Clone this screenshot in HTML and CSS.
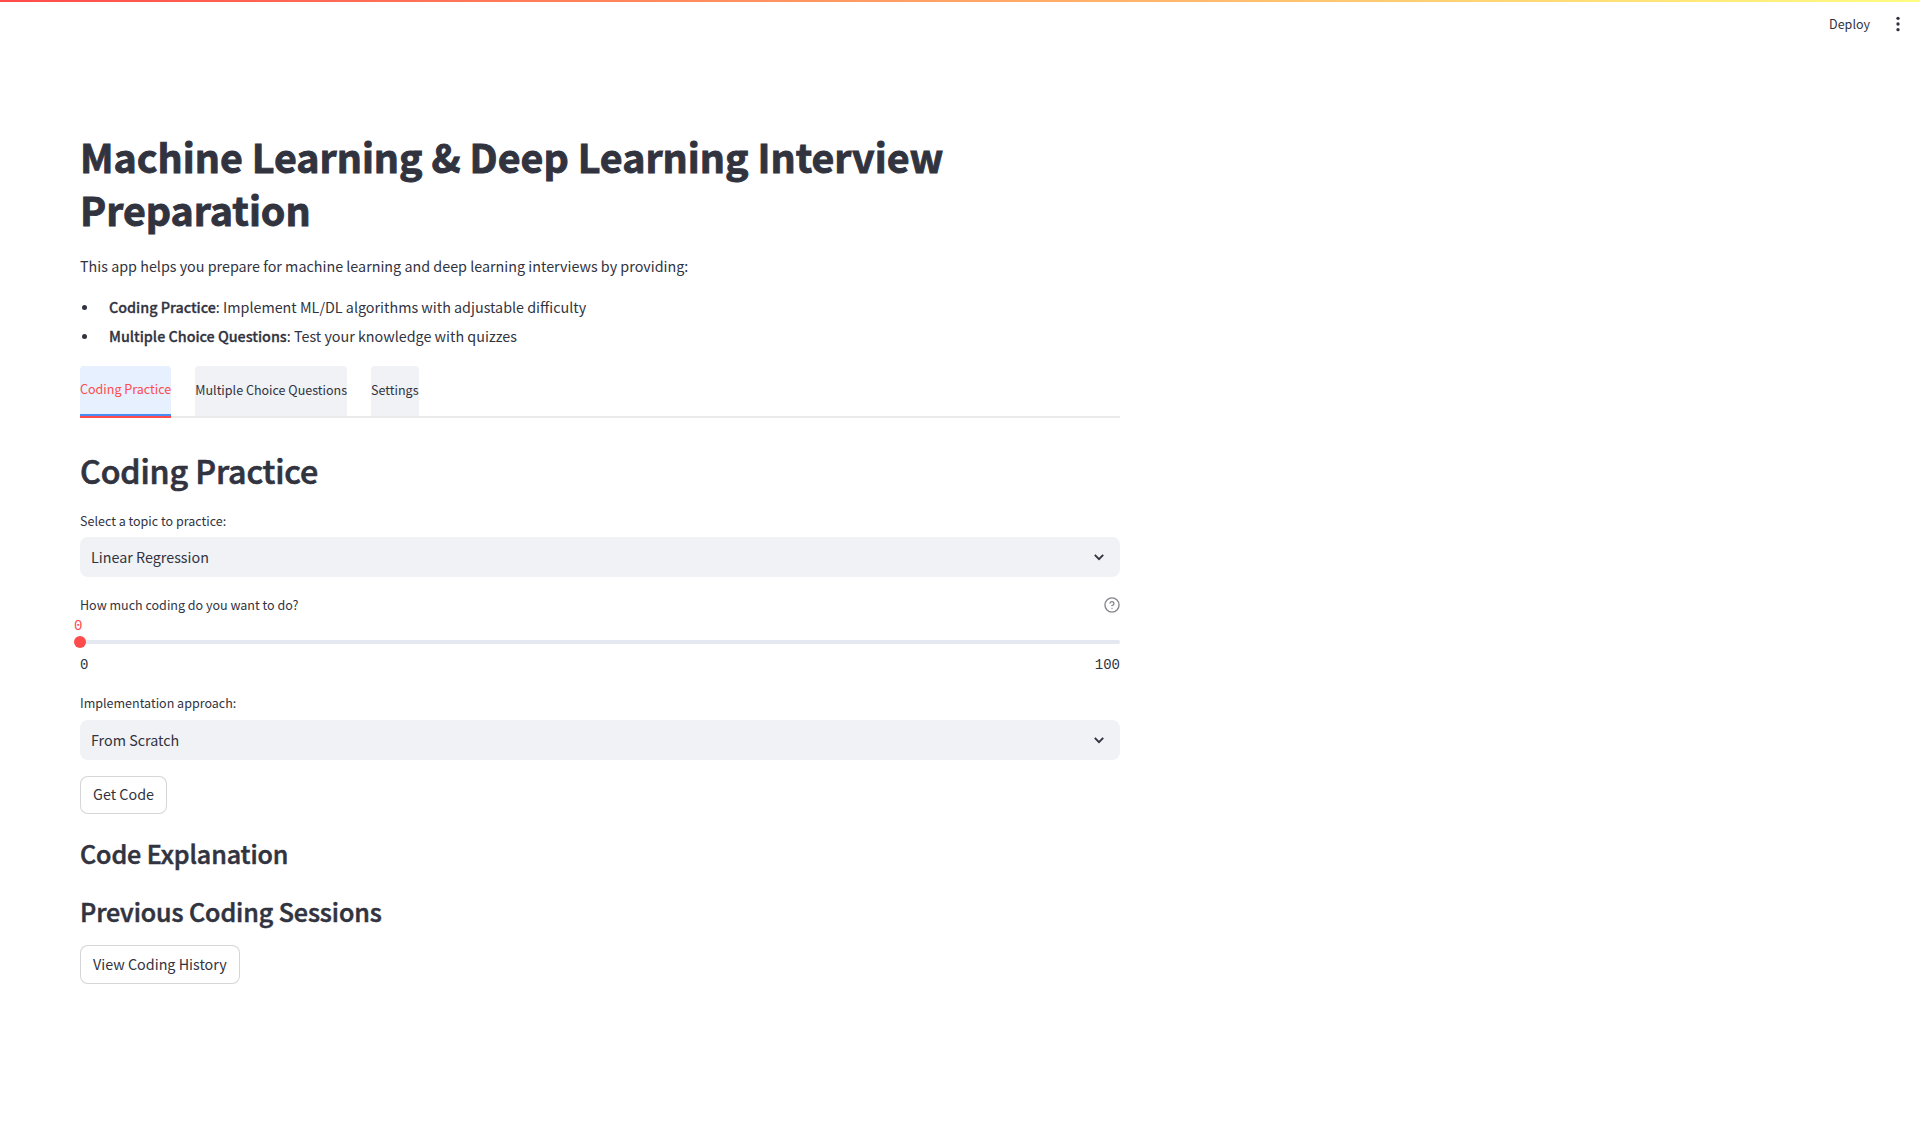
FILE: index.html
```html
<!DOCTYPE html>
<html lang="en">
<head>
<meta charset="utf-8">
<title>Interview Preparation</title>
<link rel="stylesheet" href="styles.css">
</head>
<body>
<header class="topbar">
  <span class="deploy">Deploy</span>
  <svg class="menu-icon" width="20" height="20" viewBox="0 0 24 24" fill="currentColor"><circle cx="12" cy="5.2" r="2"/><circle cx="12" cy="12" r="2"/><circle cx="12" cy="18.8" r="2"/></svg>
</header>
<main class="content">
  <h1 class="title">Machine Learning &amp; Deep Learning Interview Preparation</h1>
  <p class="intro">This app helps you prepare for machine learning and deep learning interviews by providing:</p>
  <ul class="features">
    <li><strong>Coding Practice</strong>: Implement ML/DL algorithms with adjustable difficulty</li>
    <li><strong>Multiple Choice Questions</strong>: Test your knowledge with quizzes</li>
  </ul>
  <nav class="tabs">
    <a class="tab tab-active">Coding Practice</a>
    <a class="tab">Multiple Choice Questions</a>
    <a class="tab">Settings</a>
  </nav>
  <h2 class="heading">Coding Practice</h2>
  <div class="label">Select a topic to practice:</div>
  <div class="select">
    <span>Linear Regression</span>
    <svg class="chevron" width="10" height="7" viewBox="0 0 10 7" fill="none" stroke="currentColor" stroke-width="1.9"><path d="M.8.9 5 5.1 9.2.9"/></svg>
  </div>
  <div class="label label-slider">
    <span>How much coding do you want to do?</span>
    <svg class="help" width="16" height="16" viewBox="0 0 24 24" fill="none" stroke="currentColor" stroke-width="2" stroke-linecap="round" stroke-linejoin="round"><circle cx="12" cy="12" r="10.6"/><path d="M9.09 9a3 3 0 0 1 5.83 1c0 2-3 3-3 3"/><path d="M12 17h.01"/></svg>
  </div>
  <div class="slider">
    <div class="track"><span class="value">0</span><span class="thumb"></span></div>
    <div class="range"><span>0</span><span>100</span></div>
  </div>
  <div class="label label-approach">Implementation approach:</div>
  <div class="select">
    <span>From Scratch</span>
    <svg class="chevron" width="10" height="7" viewBox="0 0 10 7" fill="none" stroke="currentColor" stroke-width="1.9"><path d="M.8.9 5 5.1 9.2.9"/></svg>
  </div>
  <button class="button button-code">Get Code</button>
  <h3 class="subheading">Code Explanation</h3>
  <h3 class="subheading">Previous Coding Sessions</h3>
  <button class="button">View Coding History</button>
</main>
</body>
</html>
```
FILE: styles.css
```css
* { box-sizing: border-box; }

body {
  margin: 0;
  background: #fff;
  color: #31333f;
  font: 400 14.33px/25.6px "Noto Sans CJK SC", "Noto Sans", sans-serif;
}

h1, h2, h3, p, ul { margin: 0; padding: 0; }

.topbar {
  display: flex;
  justify-content: flex-end;
  align-items: center;
  gap: 18px;
  height: 49px;
  padding: 0 12px 1px 0;
  background: linear-gradient(90deg, #ff4b4b, #fffd80) top / 100% 2px no-repeat;
}
.deploy { font-size: 12.52px; line-height: 22px; padding-bottom: 1px; }
.menu-icon { display: block; }

.content { width: 1120px; padding: 81px 0 0 80px; }

.title {
  font-size: 39.36px;
  line-height: 52.8px;
  font-weight: 700;
  -webkit-text-stroke: .9px #31333f;
}
.intro { margin-top: 17.4px; }

.features { margin-top: 15.4px; list-style: none; }
.features li {
  display: flex;
  align-items: center;
  white-space: pre;
  margin-bottom: 3.4px;
}
.features li::before {
  content: "";
  width: 5px;
  height: 5px;
  margin: 1px 22px 0 2px;
  border-radius: 50%;
  background: #31333f;
}
.features strong {
  font-weight: 500;
  -webkit-text-stroke: .3px #31333f;
}

.tabs {
  display: flex;
  gap: 24px;
  height: 52px;
  margin-top: 17.4px;
  border-bottom: 2px solid #eaeaeb;
  font-size: 12.54px;
}
.tab {
  display: flex;
  align-items: center;
  height: 50px;
  padding-bottom: 2px;
  border-radius: 4px 4px 0 0;
  background: #f0f2f6;
  white-space: nowrap;
}
.tab-active {
  height: 52px;
  padding-bottom: 6px;
  color: #ff4b4b;
  background:
    linear-gradient(#ff4b4b, #ff4b4b) bottom / 100% 2px no-repeat,
    linear-gradient(#4b8bf4, #4b8bf4) bottom / 100% 4px no-repeat,
    #e6f0ff;
}

.heading {
  margin: 31.2px 0 17.2px;
  font-size: 32.2px;
  line-height: 43.2px;
  font-weight: 500;
  letter-spacing: -.13px;
  -webkit-text-stroke: .7px #31333f;
}

.label { height: 27.4px; font-size: 12.52px; line-height: 22.4px; }
.label-slider {
  display: flex;
  justify-content: space-between;
  height: 22.4px;
  margin-top: 16.6px;
}
.label-approach { line-height: 21px; }
.help { margin-top: 3px; color: #83848c; }

.select {
  display: flex;
  justify-content: space-between;
  align-items: center;
  height: 40px;
  padding: 0 16px 0 11px;
  border-radius: 8px;
  background: #f0f2f6;
}
.chevron { margin-top: 1px; }

.slider { height: 76.6px; padding-top: 24px; font: 14px/22px "Liberation Mono", monospace; }
.track {
  position: relative;
  height: 4px;
  border-radius: 2px;
  background: #e4e8f0;
}
.thumb {
  position: absolute;
  left: -6px;
  top: -4px;
  width: 12px;
  height: 12px;
  border-radius: 50%;
  background: #ff4b4b;
}
.value { position: absolute; left: -6px; top: -24.5px; color: #ff4b4b; }
.range { display: flex; justify-content: space-between; padding-top: 10.4px; }

.button {
  display: block;
  height: 38.4px;
  padding: 0 12.1px 2px;
  border: 1px solid rgba(49, 51, 63, .2);
  border-radius: 8px;
  background: #fff;
  color: inherit;
  font: inherit;
}
.button-code { margin: 16px 0 23px; }

.subheading {
  height: 58px;
  font-size: 25.05px;
  line-height: 33.6px;
  font-weight: 500;
  letter-spacing: -.09px;
  -webkit-text-stroke: .55px #31333f;
}
.subheading + .button { margin-top: -8px; }
```
